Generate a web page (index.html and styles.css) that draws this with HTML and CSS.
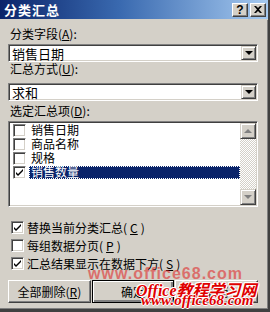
FILE: index.html
```html
<!DOCTYPE html>
<html lang="zh-CN">
<head>
  <meta charset="UTF-8">
  <title>分类汇总</title>
  <link rel="stylesheet" href="styles.css">
</head>
<body>

<div class="dialog">
  <div class="titlebar">
    <span class="title">分类汇总</span>
    <div class="tb-btns">
      <span class="tb-btn">?</span>
      <span class="tb-btn">
        <svg width="8" height="7" viewBox="0 0 8 7"><path d="M0 0h2l2 2 2-2h2L5 3.5 8 7H6L4 5 2 7H0l3-3.5z" fill="#000"/></svg>
      </span>
    </div>
  </div>

  <div class="body">
    <div class="label lbl-first">分类字段(<u>A</u>):</div>
    <div class="combo">
      <span class="combo-text">销售日期</span>
      <span class="drop"><span class="arrow-down"></span></span>
    </div>

    <div class="label lbl-second">汇总方式(<u>U</u>):</div>
    <div class="combo combo-second">
      <span class="combo-text">求和</span>
      <span class="drop"><span class="arrow-down"></span></span>
    </div>

    <div class="label lbl-third">选定汇总项(<u>D</u>):</div>
    <div class="listbox">
      <div class="items">
        <div class="item"><span class="box"></span><span class="item-text">销售日期</span></div>
        <div class="item"><span class="box"></span><span class="item-text">商品名称</span></div>
        <div class="item"><span class="box"></span><span class="item-text">规格</span></div>
        <div class="item selected">
          <span class="box"><svg width="9" height="9" viewBox="0 0 9 9"><path d="M1 4l2 2 5-5v2L3 8 1 6z" fill="#000"/></svg></span>
          <span class="item-text">销售数量</span>
        </div>
      </div>
      <div class="scrollbar">
        <span class="sb-btn"><span class="arrow-up gray"></span></span>
        <span class="sb-track"></span>
        <span class="sb-btn"><span class="arrow-down gray"></span></span>
      </div>
    </div>

    <div class="checks">
      <div class="check"><span class="box"><svg width="9" height="9" viewBox="0 0 9 9"><path d="M1 4l2 2 5-5v2L3 8 1 6z" fill="#000"/></svg></span>替换当前分类汇总(<u>C</u>)</div>
      <div class="check"><span class="box"></span>每组数据分页(<u>P</u>)</div>
      <div class="check"><span class="box"><svg width="9" height="9" viewBox="0 0 9 9"><path d="M1 4l2 2 5-5v2L3 8 1 6z" fill="#000"/></svg></span>汇总结果显示在数据下方(<u>S</u>)</div>
    </div>

    <div class="buttons">
      <button>全部删除(<u>R</u>)</button>
      <button class="default">确定</button>
      <button>取消</button>
    </div>
  </div>

  <!-- 水印 -->
  <div class="wm-faint">www.office68.com</div>
  <div class="wm-main">Office教程学习网</div>
  <div class="wm-url">www.office68.com</div>
</div>

</body>
</html>
```

FILE: styles.css
```css
body {
  margin: 0;
  background: #d4d0c8;
  font-family: "Noto Sans CJK SC", "Liberation Sans", sans-serif;
  font-size: 12px;
  color: #000;
}
u {
  text-decoration: underline;
  text-underline-offset: 1px;
}
.dialog {
  position: relative;
  width: 268px;
  height: 309px;
  background: #d4d0c8;
  border-right: 2px solid #404040;
  border-bottom: 3px solid #404040;
  box-shadow: inset -1px -1px #808080;
  overflow: hidden;
}
.titlebar {
  height: 19px;
  display: flex;
  align-items: center;
  justify-content: space-between;
  padding: 0 2px 0 4px;
  background: linear-gradient(to right, #0a246a, #3a6ab0 45%, #a6caf0);
  border-bottom: 1px solid #d4d0c8;
}
.title {
  color: #fff;
  font-weight: bold;
  font-size: 13px;
  letter-spacing: 1px;
}
.tb-btns {
  display: flex;
  gap: 2px;
}
.tb-btn {
  width: 16px;
  height: 14px;
  display: flex;
  align-items: center;
  justify-content: center;
  box-sizing: border-box;
  background: #d4d0c8;
  border-top: 1px solid #fff;
  border-left: 1px solid #fff;
  border-right: 1px solid #404040;
  border-bottom: 1px solid #404040;
  box-shadow: inset -1px -1px #808080;
  font-family: "Liberation Sans", sans-serif;
  font-weight: bold;
  font-size: 12px;
  line-height: 12px;
}
.body {
  padding: 0 10px 0 8px;
}
.label {
  height: 14px;
  line-height: 14px;
  padding-left: 2px;
}
.lbl-first { margin-top: 7px; }
.lbl-second { margin-top: 0; }
.lbl-third { margin-top: 3px; }
.combo {
  margin-top: 3px;
  height: 18px;
  box-sizing: border-box;
  display: flex;
  align-items: center;
  justify-content: space-between;
  background: #fff;
  border-top: 1px solid #808080;
  border-left: 1px solid #808080;
  border-right: 1px solid #fff;
  border-bottom: 1px solid #fff;
  box-shadow: inset 1px 1px #404040, inset -1px -1px #d4d0c8;
}
.combo-second {
  margin-top: 7px;
}
.combo-text {
  padding-left: 3px;
  font-size: 13px;
  line-height: 15px;
}
.drop, .sb-btn {
  width: 15px;
  height: 14px;
  margin-right: 1px;
  box-sizing: border-box;
  display: flex;
  align-items: center;
  justify-content: center;
  background: #d4d0c8;
  border-top: 1px solid #d4d0c8;
  border-left: 1px solid #d4d0c8;
  border-right: 1px solid #404040;
  border-bottom: 1px solid #404040;
  box-shadow: inset 1px 1px #fff, inset -1px -1px #808080;
}
.arrow-down {
  width: 0;
  height: 0;
  border-left: 4px solid transparent;
  border-right: 4px solid transparent;
  border-top: 4px solid #000;
}
.arrow-up {
  width: 0;
  height: 0;
  border-left: 4px solid transparent;
  border-right: 4px solid transparent;
  border-bottom: 4px solid #000;
}
.arrow-down.gray { border-top-color: #808080; }
.arrow-up.gray { border-bottom-color: #808080; }
.listbox {
  margin-top: 3px;
  height: 86px;
  box-sizing: border-box;
  display: flex;
  background: #fff;
  border-top: 1px solid #808080;
  border-left: 1px solid #808080;
  border-right: 1px solid #fff;
  border-bottom: 1px solid #fff;
  box-shadow: inset 1px 1px #404040, inset -1px -1px #d4d0c8;
  padding: 1px 1px 1px 2px;
}
.items {
  flex: 1;
}
.item {
  height: 14px;
  display: flex;
  align-items: center;
  padding-left: 2px;
}
.item .box {
  margin-right: 3px;
}
.item-text {
  height: 13px;
  line-height: 12px;
  padding: 0 2px;
  font-size: 12px;
}
.item.selected .item-text {
  flex: 1;
  background: #0a246a;
  color: #fff;
  outline: 1px dotted #fff;
  outline-offset: -1px;
}
.box {
  width: 13px;
  height: 13px;
  flex: none;
  box-sizing: border-box;
  display: inline-flex;
  align-items: center;
  justify-content: center;
  background: #fff;
  border-top: 1px solid #808080;
  border-left: 1px solid #808080;
  border-right: 1px solid #fff;
  border-bottom: 1px solid #fff;
  box-shadow: inset 1px 1px #404040, inset -1px -1px #d4d0c8;
}
.scrollbar {
  width: 16px;
  display: flex;
  flex-direction: column;
}
.scrollbar .sb-btn {
  width: 16px;
  height: 16px;
  margin: 0;
}
.sb-track {
  flex: 1;
  background: repeating-conic-gradient(#fff 0 25%, #d4d0c8 0 50%) 0 0 / 2px 2px;
}
.checks {
  margin-top: 11px;
  padding-left: 3px;
}
.check {
  height: 18px;
  display: flex;
  align-items: center;
  gap: 3px;
  font-size: 12px;
}
.buttons {
  margin-top: 8px;
  display: grid;
  grid-template-columns: repeat(3, 1fr);
  gap: 1px;
}
button {
  height: 23px;
  padding: 0;
  font-family: "Noto Sans CJK SC", "Liberation Sans", sans-serif;
  font-size: 12px;
  color: #000;
  background: #d4d0c8;
  border-top: 1px solid #fff;
  border-left: 1px solid #fff;
  border-right: 1px solid #404040;
  border-bottom: 1px solid #404040;
  box-shadow: inset -1px -1px #808080;
}
button.default {
  border: 1px solid #000;
  box-shadow: inset 1px 1px #fff, inset -2px -2px #808080;
}
.wm-faint {
  position: absolute;
  left: 88px;
  top: 265px;
  font-family: "Liberation Sans", sans-serif;
  font-weight: bold;
  font-size: 16px;
  color: #e02020;
  opacity: 0.55;
  letter-spacing: 1px;
}
.wm-main {
  position: absolute;
  left: 136px;
  top: 277px;
  font-family: "Liberation Serif", "Noto Sans CJK SC", serif;
  font-weight: bold;
  font-style: italic;
  font-size: 16px;
  color: #e00000;
  text-shadow: 1px 0 #fff, -1px 0 #fff, 0 1px #fff, 0 -1px #fff, 1px 1px #fff, -1px -1px #fff;
}
.wm-url {
  position: absolute;
  left: 141px;
  top: 292px;
  font-family: "Liberation Serif", serif;
  font-weight: bold;
  font-style: italic;
  font-size: 15px;
  color: #e00000;
  text-shadow: 1px 0 #fff, -1px 0 #fff, 0 1px #fff, 0 -1px #fff;
}
```
